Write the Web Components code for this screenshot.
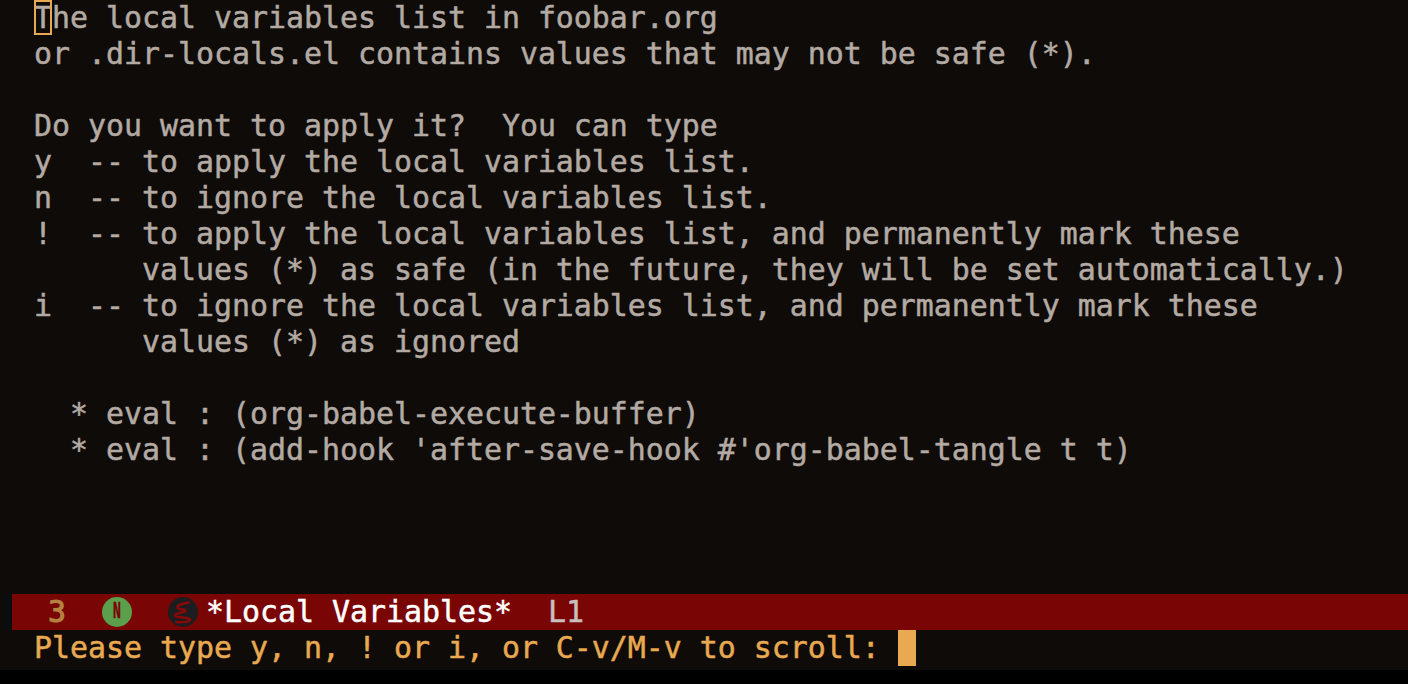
<!DOCTYPE html>
<html lang="en"><head><meta charset="utf-8"><title>Local Variables</title>
<style>html,body{margin:0;height:100%;background:#000}</style></head><body>
<emacs-frame>
<emacs-buffer><text-cursor></text-cursor>The local variables list in foobar.org
or .dir-locals.el contains values that may not be safe (*).

Do you want to apply it?  You can type
y  -- to apply the local variables list.
n  -- to ignore the local variables list.
!  -- to apply the local variables list, and permanently mark these
      values (*) as safe (in the future, they will be set automatically.)
i  -- to ignore the local variables list, and permanently mark these
      values (*) as ignored

  * eval : (org-babel-execute-buffer)
  * eval : (add-hook 'after-save-hook #'org-babel-tangle t t)</emacs-buffer>
<emacs-modeline slot="modeline" count="3" state="N" name="*Local Variables*" line="L1"></emacs-modeline>
<emacs-minibuffer slot="minibuffer">Please type y, n, ! or i, or C-v/M-v to scroll: </emacs-minibuffer>
</emacs-frame>
<script>
const MONO = '"DejaVu Sans Mono", monospace';

class EmacsFrame extends HTMLElement {
  constructor() {
    super();
    this.attachShadow({ mode: "open" });
    this.shadowRoot.innerHTML = `<style>
      :host { display:flex; flex-direction:column; height:684px; overflow:hidden; background:#000;
        font:29.9px/36px ${MONO}; -webkit-text-stroke:.5px currentColor; }
      .main { height:594px; background:#0f0b09; }
      .bar { height:36px; display:flex; background:#0f0b09; }
      .fringe { width:8px; margin-left:4px; background:#0a0d10; }
      .bar ::slotted(*) { flex:1; }
      .mini { height:40px; background:#0f0b09; }
    </style>
    <div class="main"><slot></slot></div>
    <div class="bar"><div class="fringe"></div><slot name="modeline"></slot></div>
    <div class="mini"><slot name="minibuffer"></slot></div>`;
  }
}

class EmacsBuffer extends HTMLElement {
  constructor() {
    super();
    this.attachShadow({ mode: "open" });
    this.shadowRoot.innerHTML = `<style>
      :host { display:block; position:relative; padding-left:34px; color:#b3aaa3; white-space:pre; }
    </style><slot></slot>`;
  }
}

// hollow cursor, sits over the first character of the buffer
class TextCursor extends HTMLElement {
  constructor() {
    super();
    this.attachShadow({ mode: "open" });
    this.shadowRoot.innerHTML = `<style>
      :host { position:absolute; left:34px; top:0; width:18px; height:35px; box-sizing:border-box; border:2px solid #e8a951; }
    </style>`;
  }
}

class ModeBadge extends HTMLElement {
  constructor() {
    super();
    this.attachShadow({ mode: "open" });
    this.shadowRoot.innerHTML = `<style>
      :host { display:flex; align-items:center; justify-content:center; width:30px; height:30px; border-radius:50%;
        background:#5a9f4b; color:#7a0505; }
      span { font:700 23px/30px "Liberation Mono", monospace; -webkit-text-stroke:.3px currentColor; transform:scaleX(.6); }
    </style><span><slot></slot></span>`;
  }
}

class EmacsLogo extends HTMLElement {
  constructor() {
    super();
    this.attachShadow({ mode: "open" });
    this.shadowRoot.innerHTML = `<style>
      :host { display:block; width:30px; height:30px; white-space:normal; }
      svg { display:block; }
    </style><svg width="30" height="30" viewBox="0 0 30 30">
      <circle cx="15" cy="15" r="15" fill="#1d1d20"/>
      <path d="M20.5 5.5C15 6.5 9 8 9.5 10.5C10 13 18 12 17.5 14C17 16 7 15.5 7 18.5C7 21 21 20 22 22.5C22.5 25 14 25.5 8.5 25"
        fill="none" stroke="#8c0808" stroke-width="2.5" stroke-linecap="round"/>
    </svg>`;
  }
}

class EmacsModeline extends HTMLElement {
  constructor() {
    super();
    this.attachShadow({ mode: "open" });
    const a = (n) => this.getAttribute(n);
    this.shadowRoot.innerHTML = `<style>
      :host { display:flex; align-items:center; height:36px; padding-left:36px; background:#7a0505; white-space:pre; }
      .count { width:18px; color:#b5833f; -webkit-text-stroke:1px currentColor; }
      mode-badge { margin-left:36px; }
      emacs-logo { margin-left:36px; }
      .name { margin-left:8px; color:#fff; }
      .line { margin-left:36px; color:#c8bebe; }
    </style>
    <span class="count">${a("count")}</span>
    <mode-badge>${a("state")}</mode-badge>
    <emacs-logo></emacs-logo>
    <span class="name">${a("name")}</span>
    <span class="line">${a("line")}</span>`;
  }
}

class EmacsMinibuffer extends HTMLElement {
  constructor() {
    super();
    this.attachShadow({ mode: "open" });
    this.shadowRoot.innerHTML = `<style>
      :host { display:flex; height:36px; padding-left:34px; color:#e8a951; white-space:pre; }
      .point { width:18px; height:36px; background:#e8a951; }
    </style><slot></slot><div class="point"></div>`;
  }
}

customElements.define("emacs-frame", EmacsFrame);
customElements.define("emacs-buffer", EmacsBuffer);
customElements.define("text-cursor", TextCursor);
customElements.define("mode-badge", ModeBadge);
customElements.define("emacs-logo", EmacsLogo);
customElements.define("emacs-modeline", EmacsModeline);
customElements.define("emacs-minibuffer", EmacsMinibuffer);
</script></body></html>
